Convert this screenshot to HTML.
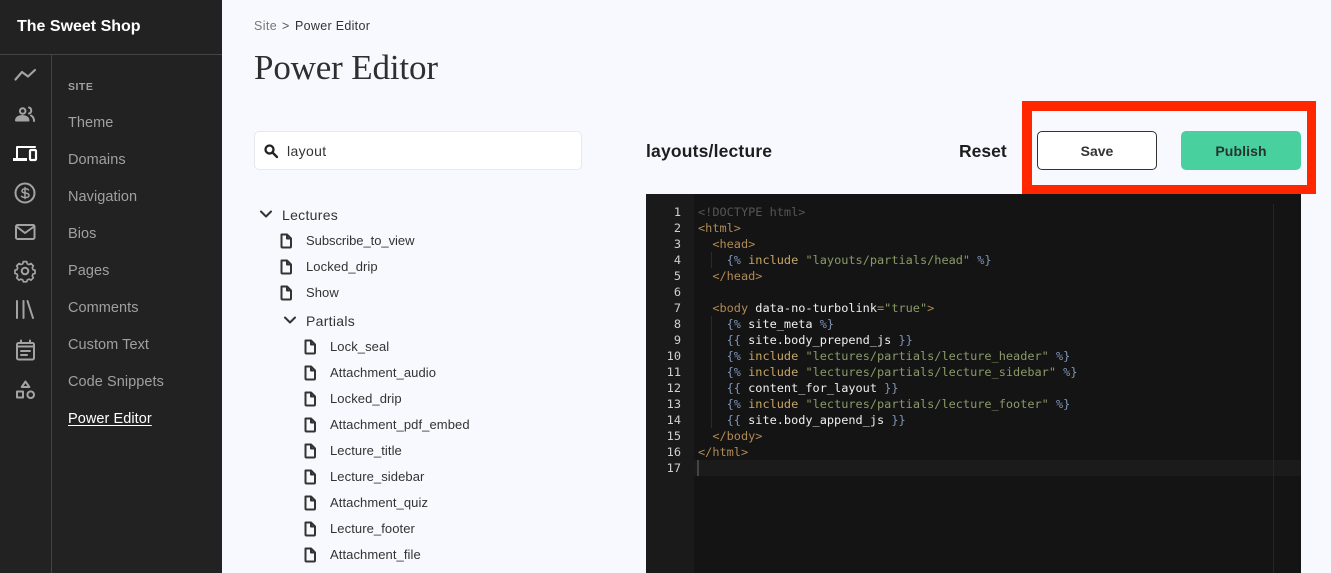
<!DOCTYPE html>
<html>
<head>
<meta charset="utf-8">
<style>
*{box-sizing:border-box;margin:0;padding:0}
html,body{width:1331px;height:573px;overflow:hidden;background:#f8f9fe;font-family:"Liberation Sans",sans-serif}
.a{position:absolute;white-space:nowrap;line-height:20px}
#side{position:absolute;left:0;top:0;width:222px;height:573px;background:#222222}
.nav{left:68px;font-size:14.5px;letter-spacing:.06px;color:#a0a0a0}
.t{font-size:13px;letter-spacing:.08px;color:#333}
.code{position:absolute;left:646px;top:194px;width:655px;height:379px;background:#141414;overflow:hidden}
.gut{position:absolute;left:0;top:0;width:48px;height:379px;background:#1a1a1a}
.ln{position:absolute;left:0;width:35px;text-align:right;font:11.9px/16px "DejaVu Sans Mono",monospace;color:#d0d0d0}
.cl{position:absolute;left:52px;white-space:pre;font:11.9px/16px "DejaVu Sans Mono",monospace;color:#f0f0f0}
.g{color:#555}.o{color:#b08a55}.k{color:#c8a464}.s{color:#8a9a68}.b{color:#7f94b8}
svg{position:absolute;overflow:visible}
</style>
</head>
<body>
<div id="side"></div>
<div class="a" style="left:17px;top:17px;font-size:16px;font-weight:bold;color:#fff">The Sweet Shop</div>
<div style="position:absolute;left:0;top:54px;width:222px;height:1px;background:#444"></div>
<div style="position:absolute;left:51px;top:54px;width:1px;height:519px;background:#444"></div>

<svg style="left:0;top:0" width="52" height="410" fill="none" stroke="#a3a3a3" stroke-width="2" stroke-linecap="round" stroke-linejoin="round">
<path d="M15.500 79.500L22 72L28 76.500L35 70" stroke-width="2.200"/>
<circle cx="22.700" cy="111" r="2.800"/><path d="M16 120.500c0-6 12.500-6 12.500 0z" fill="#a3a3a3"/><path d="M29 107.500c3 .5 3 5.500 0 6M31 115.500c2 1 3 3 3 5.500"/>
<g stroke="#fff"><path d="M17 158v-11h18"/><path d="M13 159.500h14" stroke-width="3" stroke-linecap="butt"/><rect x="30" y="150" width="6" height="10" rx="1" stroke-width="2.200"/></g>
<circle cx="25" cy="193" r="9.500"/><path d="M28.500 190c-1-1.500-6.500-2-6.500 1 0 3 7 1 7 4.300 0 3-6 2.700-7.500 1M25 187.500v11" stroke-width="1.500"/>
<rect x="16" y="225" width="18.500" height="14" rx="1.500"/><path d="M16.500 226.500L25 233L34 226.500"/>
<circle cx="25" cy="271" r="3.300"/><path d="M23 262h4l.6 2.400 2.200 1 2.200-1.200 2.800 2.800-1.200 2.200.8 2.200 2.400.7v3.800l-2.400.7-.8 2.200 1.200 2.200-2.800 2.800-2.200-1.200-2.200 1-.6 2.100h-4l-.6-2.100-2.200-1-2.200 1.200-2.800-2.800 1.200-2.200-.8-2.200-2.400-.7v-3.800l2.400-.7.8-2.200-1.200-2.200 2.800-2.800 2.200 1.200 2.200-1z" transform="translate(25 271) scale(.85) translate(-25 -273)"/>
<path d="M17 301v17M23.500 301v17M27.500 301l5.500 17"/>
<rect x="17" y="343" width="17" height="16.500" rx="1.500"/><path d="M21 340.500v2.500M30 340.500v2.500M17 346.500h17M21 351h9M21 355h6"/>
<path d="M25.500 381.500l3.800 5.500h-7.600z"/><rect x="17" y="391.500" width="6" height="6"/><circle cx="30.700" cy="394.700" r="3.300"/>
</svg>

<div class="a" style="left:68px;top:77px;font-size:10.5px;font-weight:bold;color:#a0a0a0;letter-spacing:.5px">SITE</div>
<div class="a nav" style="top:113px">Theme</div>
<div class="a nav" style="top:150px">Domains</div>
<div class="a nav" style="top:187px">Navigation</div>
<div class="a nav" style="top:224px">Bios</div>
<div class="a nav" style="top:261px">Pages</div>
<div class="a nav" style="top:298px">Comments</div>
<div class="a nav" style="top:335px">Custom Text</div>
<div class="a nav" style="top:372px">Code Snippets</div>
<div class="a nav" style="top:409px;color:#fff;text-decoration:underline;text-underline-offset:2px">Power Editor</div>

<div class="a" style="left:254px;top:16px;font-size:12.500px;letter-spacing:.4px;color:#777">Site</div>
<div class="a" style="left:282px;top:16px;font-size:12.500px;color:#555">&gt;</div>
<div class="a" style="left:295px;top:16px;font-size:12.500px;letter-spacing:.3px;color:#333">Power Editor</div>
<div class="a" style="left:254px;top:48px;line-height:40px;font-family:'Liberation Serif',serif;font-size:35px;letter-spacing:-.15px;color:#2f2f2f">Power Editor</div>

<div style="position:absolute;left:254px;top:131px;width:328px;height:39px;background:#fff;border:1px solid #e6e8f0;border-radius:5px"></div>
<svg style="left:264px;top:144px" width="14" height="14" fill="none" stroke="#222" stroke-width="2.300"><circle cx="5.500" cy="5.500" r="4"/><path d="M8.500 8.500L13 13" stroke-linecap="round"/></svg>
<div class="a" style="left:287px;top:141px;font-size:14px;letter-spacing:.35px;color:#333">layout</div>

<svg style="left:0;top:0" width="600" height="573" fill="none" stroke="#333" stroke-width="2" stroke-linejoin="round" stroke-linecap="round">
<path d="M261 211.500l5 5 5-5M285 317.500l5 5 5-5"/>
<defs><path id="f" d="M0 0h5.500l4 4v8a1 1 0 0 1-1 1h-7.500a1 1 0 0 1-1-1zM5.500 0v4h4"/></defs>
<use href="#f" x="281.500" y="234.500"/><use href="#f" x="281.500" y="260.500"/><use href="#f" x="281.500" y="286.500"/>
<use href="#f" x="305.500" y="340.500"/><use href="#f" x="305.500" y="366.500"/><use href="#f" x="305.500" y="392.500"/><use href="#f" x="305.500" y="418.500"/><use href="#f" x="305.500" y="444.500"/><use href="#f" x="305.500" y="470.500"/><use href="#f" x="305.500" y="496.500"/><use href="#f" x="305.500" y="522.500"/><use href="#f" x="305.500" y="548.500"/>
</svg>
<div class="a" style="left:282px;top:205px;font-size:14px;letter-spacing:.3px;color:#333">Lectures</div>
<div class="a t" style="left:306px;top:231px;letter-spacing:-.04px">Subscribe_to_view</div>
<div class="a t" style="left:306px;top:257px">Locked_drip</div>
<div class="a t" style="left:306px;top:283px">Show</div>
<div class="a" style="left:306px;top:311px;font-size:14px;letter-spacing:.3px;color:#333">Partials</div>
<div class="a t" style="left:330px;top:337px">Lock_seal</div>
<div class="a t" style="left:330px;top:363px">Attachment_audio</div>
<div class="a t" style="left:330px;top:389px">Locked_drip</div>
<div class="a t" style="left:330px;top:415px">Attachment_pdf_embed</div>
<div class="a t" style="left:330px;top:441px">Lecture_title</div>
<div class="a t" style="left:330px;top:467px">Lecture_sidebar</div>
<div class="a t" style="left:330px;top:493px">Attachment_quiz</div>
<div class="a t" style="left:330px;top:519px">Lecture_footer</div>
<div class="a t" style="left:330px;top:545px">Attachment_file</div>

<div class="a" style="left:646px;top:141px;font-size:17.500px;font-weight:bold;color:#1d1d1d;letter-spacing:.18px">layouts/lecture</div>
<div class="a" style="left:959px;top:141px;font-size:17.500px;font-weight:bold;color:#1d1d1d">Reset</div>

<div style="position:absolute;left:1037px;top:131px;width:120px;height:39px;background:#fff;border:1px solid #333;border-radius:5px;text-align:center;font:bold 14px/39px 'Liberation Sans',sans-serif;color:#333">Save</div>
<div style="position:absolute;left:1181px;top:131px;width:120px;height:39px;background:#48d09f;border-radius:5px;text-align:center;font:bold 14px/41px 'Liberation Sans',sans-serif;color:#26332e;letter-spacing:.1px">Publish</div>

<div class="code">
<div class="gut"></div>
<div style="position:absolute;left:48px;top:266px;width:607px;height:16px;background:#1b1b1b"></div>
<div style="position:absolute;left:51px;top:266px;width:2px;height:16px;background:#444"></div>
<div style="position:absolute;left:627px;top:10px;width:1px;height:369px;background:#262626"></div>
<div style="position:absolute;left:65px;top:58px;width:1px;height:16px;background:#2a2a2a"></div>
<div style="position:absolute;left:65px;top:122px;width:1px;height:112px;background:#2a2a2a"></div>

<div class="ln" style="top:10px">1</div><div class="ln" style="top:26px">2</div><div class="ln" style="top:42px">3</div><div class="ln" style="top:58px">4</div><div class="ln" style="top:74px">5</div><div class="ln" style="top:90px">6</div><div class="ln" style="top:106px">7</div><div class="ln" style="top:122px">8</div><div class="ln" style="top:138px">9</div><div class="ln" style="top:154px">10</div><div class="ln" style="top:170px">11</div><div class="ln" style="top:186px">12</div><div class="ln" style="top:202px">13</div><div class="ln" style="top:218px">14</div><div class="ln" style="top:234px">15</div><div class="ln" style="top:250px">16</div><div class="ln" style="top:266px">17</div>

<div class="cl g" style="top:10px">&lt;!DOCTYPE html&gt;</div>
<div class="cl o" style="top:26px">&lt;html&gt;</div>
<div class="cl o" style="top:42px">  &lt;head&gt;</div>
<div class="cl" style="top:58px">    <span class="b">{%</span> <span class="k">include</span> <span class="s">"layouts/partials/head"</span> <span class="b">%}</span></div>
<div class="cl o" style="top:74px">  &lt;/head&gt;</div>
<div class="cl" style="top:106px">  <span class="o">&lt;body</span> data-no-turbolink<span class="o">=</span><span class="s">"true"</span><span class="o">&gt;</span></div>
<div class="cl" style="top:122px">    <span class="b">{%</span> site_meta <span class="b">%}</span></div>
<div class="cl" style="top:138px">    <span class="b">{{</span> site.body_prepend_js <span class="b">}}</span></div>
<div class="cl" style="top:154px">    <span class="b">{%</span> <span class="k">include</span> <span class="s">"lectures/partials/lecture_header"</span> <span class="b">%}</span></div>
<div class="cl" style="top:170px">    <span class="b">{%</span> <span class="k">include</span> <span class="s">"lectures/partials/lecture_sidebar"</span> <span class="b">%}</span></div>
<div class="cl" style="top:186px">    <span class="b">{{</span> content_for_layout <span class="b">}}</span></div>
<div class="cl" style="top:202px">    <span class="b">{%</span> <span class="k">include</span> <span class="s">"lectures/partials/lecture_footer"</span> <span class="b">%}</span></div>
<div class="cl" style="top:218px">    <span class="b">{{</span> site.body_append_js <span class="b">}}</span></div>
<div class="cl o" style="top:234px">  &lt;/body&gt;</div>
<div class="cl o" style="top:250px">&lt;/html&gt;</div>
</div>

<div style="position:absolute;left:1022px;top:101px;width:294px;height:93px;border:10px solid #ff2600;border-bottom-width:9px;border-right-width:9px"></div>
</body>
</html>
